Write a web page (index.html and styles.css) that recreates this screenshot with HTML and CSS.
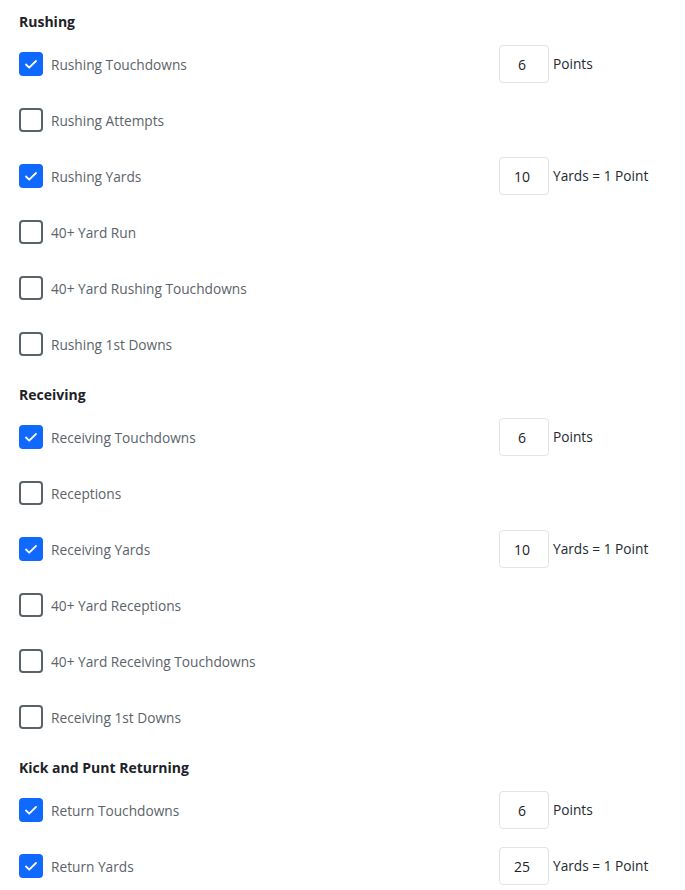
FILE: index.html
```html
<!DOCTYPE html>
<html lang="en">
<head>
  <meta charset="UTF-8" />
  <title>Scoring Settings</title>
  <link rel="stylesheet" href="styles.css">
</head>
<body>
  <div class="settings">

    <section class="group">
      <h3>Rushing</h3>
      <div class="stat">
        <label class="check"><span class="box on"></span>Rushing Touchdowns</label>
        <input class="value" type="text" value="6"><span class="unit">Points</span>
      </div>
      <div class="stat">
        <label class="check"><span class="box"></span>Rushing Attempts</label>
      </div>
      <div class="stat">
        <label class="check"><span class="box on"></span>Rushing Yards</label>
        <input class="value" type="text" value="10"><span class="unit">Yards = 1 Point</span>
      </div>
      <div class="stat">
        <label class="check"><span class="box"></span>40+ Yard Run</label>
      </div>
      <div class="stat">
        <label class="check"><span class="box"></span>40+ Yard Rushing Touchdowns</label>
      </div>
      <div class="stat">
        <label class="check"><span class="box"></span>Rushing 1st Downs</label>
      </div>
    </section>

    <section class="group">
      <h3>Receiving</h3>
      <div class="stat">
        <label class="check"><span class="box on"></span>Receiving Touchdowns</label>
        <input class="value" type="text" value="6"><span class="unit">Points</span>
      </div>
      <div class="stat">
        <label class="check"><span class="box"></span>Receptions</label>
      </div>
      <div class="stat">
        <label class="check"><span class="box on"></span>Receiving Yards</label>
        <input class="value" type="text" value="10"><span class="unit">Yards = 1 Point</span>
      </div>
      <div class="stat">
        <label class="check"><span class="box"></span>40+ Yard Receptions</label>
      </div>
      <div class="stat">
        <label class="check"><span class="box"></span>40+ Yard Receiving Touchdowns</label>
      </div>
      <div class="stat">
        <label class="check"><span class="box"></span>Receiving 1st Downs</label>
      </div>
    </section>

    <section class="group">
      <h3>Kick and Punt Returning</h3>
      <div class="stat">
        <label class="check"><span class="box on"></span>Return Touchdowns</label>
        <input class="value" type="text" value="6"><span class="unit">Points</span>
      </div>
      <div class="stat">
        <label class="check"><span class="box on"></span>Return Yards</label>
        <input class="value" type="text" value="25"><span class="unit">Yards = 1 Point</span>
      </div>
    </section>

  </div>
</body>
</html>
```

FILE: styles.css
```css
body {
  margin: 0;
  font-family: 'Open Sans', sans-serif;
  background: #fff;
  color: #1d2228;
}
.settings {
  padding: 12px 19px 0;
}
.group {
  margin-bottom: 13px;
}
h3 {
  margin: 0 0 4px;
  font-size: 14px;
  line-height: 20px;
  font-weight: 700;
  color: #1d2228;
}
.stat {
  display: flex;
  align-items: center;
  height: 56px;
}
.check {
  display: flex;
  align-items: center;
  width: 480px;
  font-size: 13.7px;
  color: #5b636a;
}
.box {
  box-sizing: border-box;
  width: 24px;
  height: 24px;
  margin-right: 8px;
  border: 2px solid #5b636a;
  border-radius: 4px;
  flex: none;
}
.box.on {
  border: none;
  background: #0f69ff url("data:image/svg+xml,%3Csvg xmlns='http://www.w3.org/2000/svg' width='24' height='24'%3E%3Cpath d='M7 12.5l3.2 3.2L17 9' fill='none' stroke='%23fff' stroke-width='1.8' stroke-linecap='round' stroke-linejoin='round'/%3E%3C/svg%3E") no-repeat center;
}
.value {
  box-sizing: border-box;
  width: 50px;
  height: 38px;
  padding: 0 4px 0 0;
  border: 1px solid #e0e4e9;
  border-radius: 4px;
  font-family: inherit;
  font-size: 14px;
  color: #1d2228;
  text-align: center;
}
.unit {
  margin-left: 4px;
  margin-top: -2px;
  font-size: 13.7px;
  color: #232a31;
}
```
